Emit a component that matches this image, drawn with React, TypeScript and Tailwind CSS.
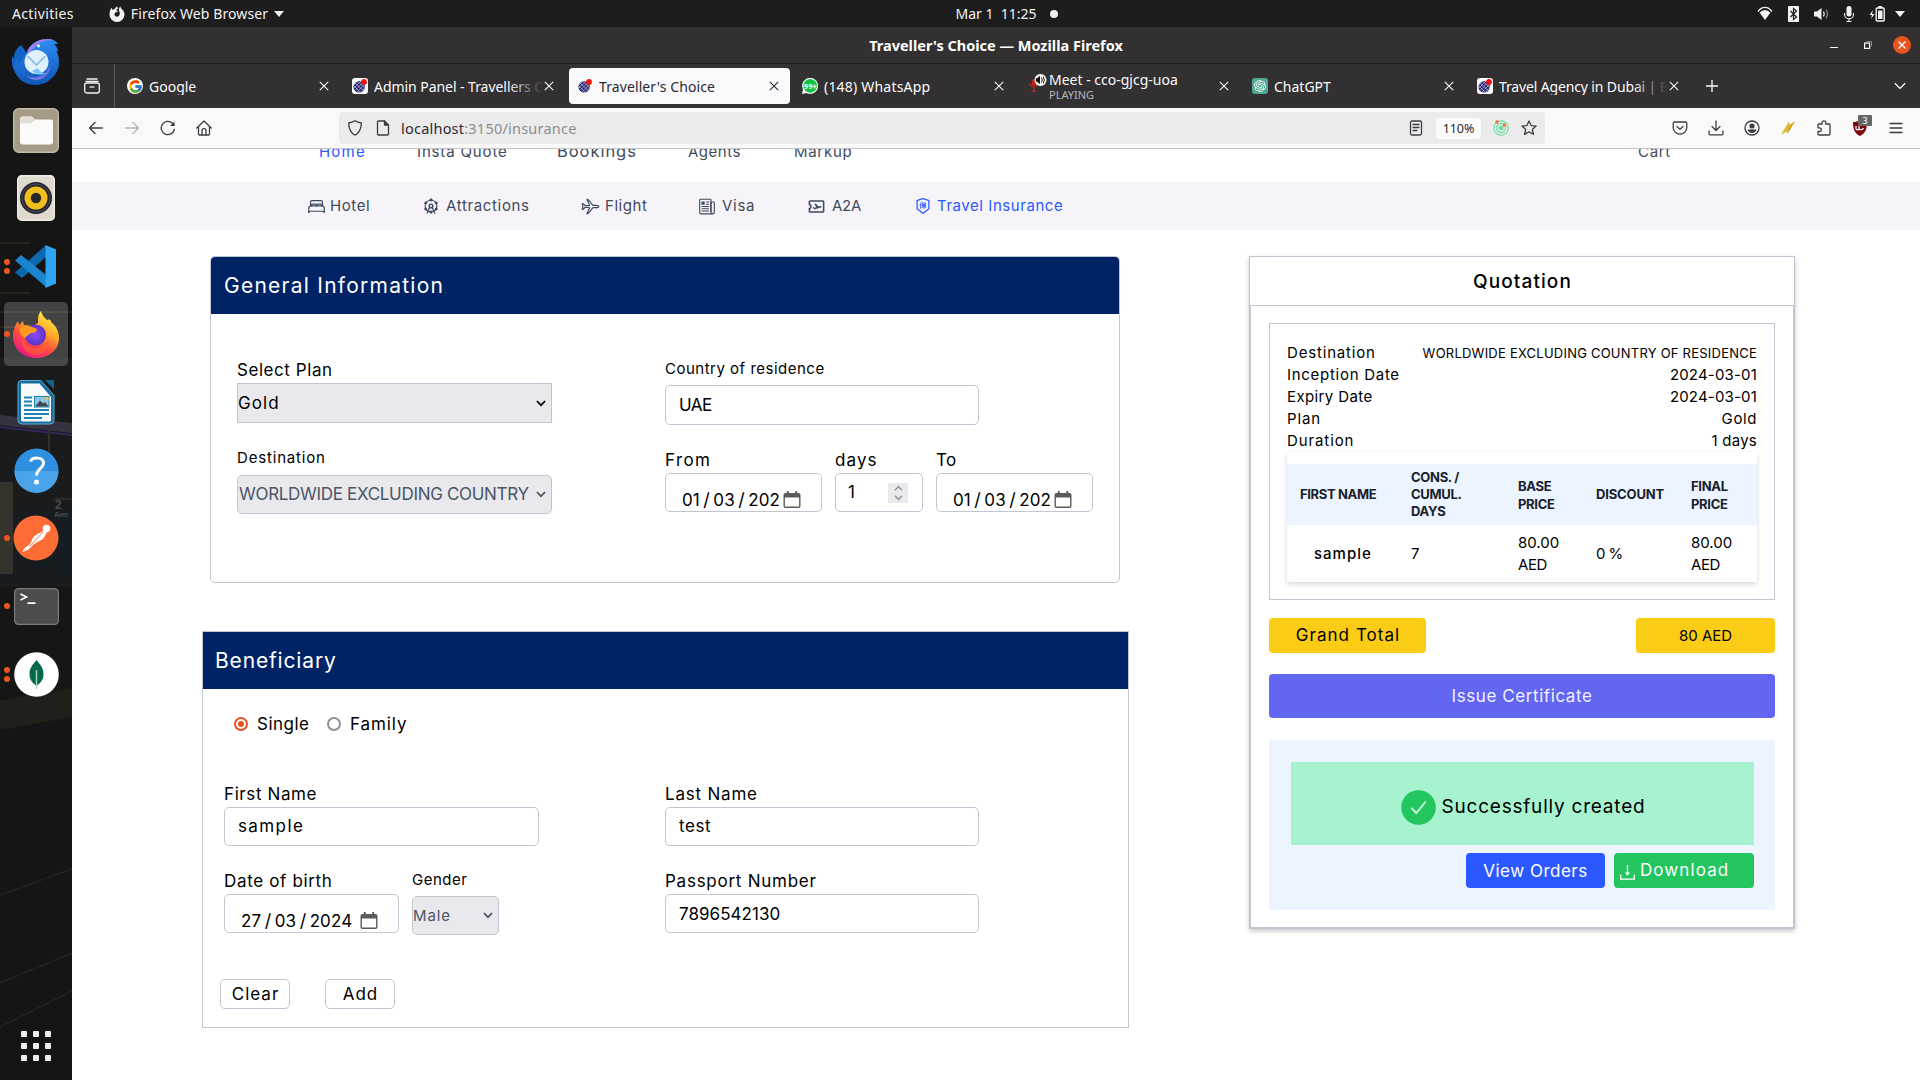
import React from 'react';
import { IoBedOutline, IoAirplaneOutline, IoNewspaperOutline } from 'react-icons/io5';
import { MdOutlineAttractions, MdOutlineAirplaneTicket } from 'react-icons/md';
import { AiOutlineInsurance } from 'react-icons/ai';
import { FcGoogle } from 'react-icons/fc';
import { SiOpenai } from 'react-icons/si';

/* ---------- desktop top bar ---------- */

function TopBar() {
  return (
    <div className="grid h-[27px] shrink-0 grid-cols-[1fr_auto_1fr] items-center bg-[#1d1d1d] text-[14px] leading-[27px] text-[#f2f2f2]">
      <div className="flex items-center pl-[12px]">
        <span className="tracking-[0.35px]">Activities</span>
        <svg className="ml-[35px] h-4 w-4" viewBox="0 0 16 16" fill="#f2f2f2">
          <path d="M8 16a7.5 7.5 0 0 1-7.5-7.6C.5 6 1.200 3.800 2.500 1.700l.9 2L5.600 3C6.200 2 7.300 1 8.300.2 8.200 1.300 8.600 2 9.300 2.600c-1.400.3-1.900 1-2 1.700l1.800.6-1.200 1.200c-1.600.2-2.800 1.500-2.300 3 .5 1.300 2 1.900 3.300 1.400 1.600-.6 2.100-2.200 1.800-3.700-.2-1.200-.9-2.300-.9-3.600C10 2 10.500 1 11.500.4c0 1 .5 1.700 1.300 2.500 1.600 1.500 2.700 3.200 2.700 5.500A7.500 7.500 0 0 1 8 16z" />
        </svg>
        <span className="ml-[6px] tracking-[0.1px]">Firefox Web Browser</span>
        <svg className="ml-[6px] h-[6px] w-[10px]" viewBox="0 0 10 6" fill="#f2f2f2"><path d="M0 0h10L5 6z" /></svg>
      </div>
      <div className="flex items-center pl-[93px]">
        <span className="whitespace-pre">Mar 1  11:25</span>
        <span className="ml-[13px] h-2 w-2 rounded-full bg-[#f2f2f2]" />
      </div>
      <div className="flex items-center justify-end pr-[11px]">
        <TrayCell>
          <svg className="h-4 w-4" viewBox="0 0 16 16"><path d="M1 5.500C5-.1 11-.1 15 5.500" fill="none" stroke="#f2f2f2" strokeWidth="1.300" /><path d="M2.500 6.500Q8 1.500 13.500 6.500L8 14z" fill="#f2f2f2" /></svg>
        </TrayCell>
        <TrayCell>
          <svg className="h-4 w-[11px]" viewBox="0 0 11 16"><rect width="11" height="16" rx="1" fill="#f2f2f2" /><path d="M2.500 5l6 6-3 2.500V2.500l3 2.500-6 6" fill="none" stroke="#1d1d1d" strokeWidth="1.200" /></svg>
        </TrayCell>
        <TrayCell>
          <svg className="h-[14px] w-[15px]" viewBox="0 0 15 14"><path d="M0 4.500h3L7.500 1v12L3 9.500H0z" fill="#f2f2f2" /><path d="M9.500 4.500q1.500 2.500 0 5" fill="none" stroke="#f2f2f2" strokeWidth="1.300" /><path d="M12 2.500q3 4.500 0 9" fill="none" stroke="#8a8a8a" strokeWidth="1.300" /></svg>
        </TrayCell>
        <TrayCell>
          <svg className="h-4 w-[10px]" viewBox="0 0 10 16"><rect x="2.500" width="5" height="10.500" rx="2.500" fill="#f2f2f2" /><path d="M.6 7v1.500a4.400 4.400 0 0 0 8.800 0V7M5 13v2.500M2.500 15.500h5" fill="none" stroke="#f2f2f2" strokeWidth="1.100" /></svg>
        </TrayCell>
        <TrayCell>
          <svg className="h-4 w-[16px]" viewBox="0 0 16 16"><path d="M4 4L.5 9H3l-1 4L5.500 8H3z" fill="#f2f2f2" /><rect x="7.200" y="2" width="8" height="13" rx="1" fill="none" stroke="#f2f2f2" strokeWidth="1.400" /><rect x="9.200" width="4" height="2" fill="#f2f2f2" /><rect x="9" y="4.500" width="4.500" height="8.500" fill="#f2f2f2" /></svg>
        </TrayCell>
        <span className="flex w-[18px] justify-center">
          <svg className="h-[6px] w-[10px]" viewBox="0 0 10 6" fill="#f2f2f2"><path d="M0 0h10L5 6z" /></svg>
        </span>
      </div>
    </div>
  );
}

function TrayCell({ children }: { children: React.ReactNode }) {
  return <span className="flex w-7 justify-center">{children}</span>;
}

/* ---------- dock ---------- */

const ThunderbirdIcon = () => (
  <svg className="h-[48px] w-[50px]" viewBox="0 0 50 48">
    <defs>
      <linearGradient id="tb1" x1="0" y1="0" x2="0" y2="1"><stop offset="0" stopColor="#2f8df0" /><stop offset="1" stopColor="#0f56b8" /></linearGradient>
    </defs>
    <path d="M10 7c4 5 6 8 5 14L7 38C2 33 0 26 1 18c1 2 2 2 2 2 0-6 3-10 7-13z" fill="#1363c8" />
    <path d="M16 13C20 5 28 1 36 1c6 0 9 2 11 5l-4 0c3 3 4 5 4 8l-2-2c4 7 4 17 0 23-4 7-12 12-20 12C14 47 6 41 4 33c-1-5 0-9 3-13l-1 8 6-7c1-3 2-5 4-8z" fill="url(#tb1)" />
    <path d="M17 12C21 4 30 1 36 1c3 0 5 .5 7 1.500C37 1.500 30 3 26 7l-9 9z" fill="#9d7ff0" />
    <path d="M16 38c9 3 20 1 23-11 1 8-6 15-14 15-4 0-7-2-9-4z" fill="#6f74e4" />
    <circle cx="25.500" cy="24" r="12" fill="#dff1fd" />
    <path d="M16.500 18l9 9 9-9" fill="none" stroke="#7fb6ea" strokeWidth="1.500" />
    <path d="M21 33c4 4 9 5 14 2-4 0-7-2-8-5z" fill="#7cc4f8" />
    <circle cx="27.500" cy="8" r="1.400" fill="#fff" />
  </svg>
);
const FilesIcon = () => (
  <svg className="h-[45px] w-[46px]" viewBox="0 0 46 45">
    <rect x=".7" y=".7" width="44.600" height="43.600" rx="5" fill="#a59b87" stroke="#c4bba9" strokeWidth="1.400" />
    <path d="M7 11c0-1.500 1-2.500 2.500-2.500h9l3.500 3h16c1.500 0 2 1 2 2v20.500c0 1.500-1 2.500-2.500 2.500h-28C8 36.500 7 35.500 7 34z" fill="#fbfaf9" />
    <path d="M7 13.500V11c0-1.500 1-2.500 2.500-2.500h9l4 3-5 4H7z" fill="#e4dfd6" />
  </svg>
);
const MusicIcon = () => (
  <svg className="h-[46px] w-[38px]" viewBox="0 0 38 46">
    <rect x=".7" y=".7" width="36.600" height="44.600" rx="4" fill="#dfdacd" stroke="#f1eee6" strokeWidth="1.400" />
    <circle cx="19" cy="23" r="16" fill="#25272e" /><circle cx="19" cy="23" r="14" fill="none" stroke="#4b4a5a" strokeWidth="1" />
    <circle cx="19" cy="23" r="11.500" fill="#f0bf1b" /><circle cx="19" cy="23" r="5.200" fill="#26282b" />
  </svg>
);
const CodeIcon = () => (
  <svg className="h-[43px] w-[44px]" viewBox="0 0 44 43">
    <path d="M1 27.500L32 0v12L8 33z" fill="#0c68ae" />
    <path d="M1 15.500L7 10l25 20v12z" fill="#1b86d0" />
    <path d="M31.500 0L42 4.500v34L31.500 43z" fill="#2ea4f2" />
  </svg>
);
const FirefoxIcon = () => (
  <svg className="h-[47px] w-[46px]" viewBox="0 0 46 47">
    <defs>
      <linearGradient id="ff1" x1=".8" y1="0" x2=".25" y2="1"><stop offset="0" stopColor="#fff14a" /><stop offset=".35" stopColor="#ffb02a" /><stop offset=".65" stopColor="#ff4b3e" /><stop offset="1" stopColor="#e8128c" /></linearGradient>
      <radialGradient id="ff2"><stop offset="0" stopColor="#8a4bff" /><stop offset="1" stopColor="#5a34c2" /></radialGradient>
    </defs>
    <path d="M28 0c1 4 3 6 6 9 3-1 4 0 4 2 5 4 8 9 8 16 0 12-10 20-23 20S0 38 0 25c0-6 2-11 5-15l1 4 4-4 1 4 8 1 6-3c0-5 0-9 3-12z" fill="url(#ff1)" />
    <circle cx="22.500" cy="24" r="10.500" fill="url(#ff2)" />
    <path d="M7 16c4-2 8-2 12 0l5 2c0 3-3 4-6 4-2 2-5 3-6 5-4-2-6-6-5-11z" fill="#ff9a1f" />
    <path d="M9 23c0 9 6 15 14 14 7 0 12-5 12-12 3 11-4 19-13 19S7 35 9 23z" fill="#ff6a2e" opacity=".5" />
  </svg>
);
const WriterIcon = () => (
  <svg className="h-[45px] w-[38px]" viewBox="0 0 38 45">
    <path d="M4 .5h20l13 15V40a4 4 0 0 1-4 4H5a4 4 0 0 1-4-4V4A3.500 3.500 0 0 1 4 .5z" fill="#1b6e9c" stroke="#58a9ce" />
    <path d="M28 0h9v9z" fill="#15628f" />
    <path d="M4 3.500h18.500L34 17v23a1.500 1.500 0 0 1-1.500 1.500h-27A1.500 1.500 0 0 1 4 40z" fill="#f7fbfd" />
    <path d="M7 17.500h8M7 21.500h8M7 25.500h8M7 30h25M7 34h25M7 38h18" stroke="#1f83b5" strokeWidth="1.800" />
    <rect x="17.500" y="16.500" width="14.500" height="10.500" fill="#8fc6e3" stroke="#1f83b5" /><path d="M18 26.500l5-6 3 3 2-1.500 3.500 4.500z" fill="#404a52" /><path d="M27 17h4.500v4z" fill="#f4c430" />
  </svg>
);
const HelpIcon = () => (
  <svg className="h-[45px] w-[45px]" viewBox="0 0 45 45">
    <circle cx="22.500" cy="22.500" r="22" fill="#2f8fe0" /><path d="M.5 23h44a22 22 0 0 1-44 0z" fill="#4ba4ea" />
    <path d="M16.500 13.500c2-5 13-4.500 13 1.500 0 5.500-7 6-7 12.500" fill="none" stroke="#fff" strokeWidth="3" /><circle cx="22.500" cy="34" r="2.500" fill="#fff" />
  </svg>
);
const PostmanIcon = () => (
  <svg className="h-[46px] w-[46px]" viewBox="0 0 46 46">
    <circle cx="23" cy="23" r="22.500" fill="#fd6c35" />
    <circle cx="33.500" cy="13.500" r="3.800" fill="#fff" /><path d="M31 15.500L21 21l-4 8-6 4.500L9.500 37l6-2.500 5.500-5.500 9-5 4-6.500z" fill="#fff" /><path d="M30 17l-14 15" stroke="#fd6c35" strokeWidth=".9" />
  </svg>
);
const TerminalIcon = () => (
  <svg className="h-[37px] w-[45px]" viewBox="0 0 45 37">
    <rect x=".6" y=".6" width="43.800" height="35.800" rx="4" fill="#4c4c4c" stroke="#7a7a7a" strokeWidth="1.200" />
    <path d="M6.500 6l6 3-6 3M13.500 15.200h8" fill="none" stroke="#fff" strokeWidth="1.700" />
  </svg>
);
const MongoIcon = () => (
  <svg className="h-[45px] w-[45px]" viewBox="0 0 45 45">
    <circle cx="22.500" cy="22.500" r="22.300" fill="#fff" /><path d="M22.500 8c4 5 7 8 7 14 0 6-3 9-6.500 11.500V37h-1v-3.500c-3.500-2.500-6.500-5.500-6.500-11.500s3-9 7-14z" fill="#04684a" /><path d="M22.500 18v19" stroke="#a9d3bf" strokeWidth="1.500" />
  </svg>
);

const DOCK = [
  { Icon: ThunderbirdIcon, dots: 0 }, { Icon: FilesIcon, dots: 0 }, { Icon: MusicIcon, dots: 0 }, { Icon: CodeIcon, dots: 2 },
  { Icon: FirefoxIcon, dots: 1, active: true }, { Icon: WriterIcon, dots: 0 }, { Icon: HelpIcon, dots: 0 }, { Icon: PostmanIcon, dots: 1 },
  { Icon: TerminalIcon, dots: 1 }, { Icon: MongoIcon, dots: 2 },
];

function Dock() {
  return (
    <div className="relative flex w-[72px] shrink-0 flex-col justify-between overflow-hidden bg-[#151515]">
      <svg className="absolute inset-0 h-full w-full" viewBox="0 0 72 1053" preserveAspectRatio="none">
        <path d="M0 216h30M0 266h30M0 285h72M0 300h60" stroke="#3a3223" strokeWidth="1" />
        <rect y="330" width="72" height="230" fill="#1a1b1d" />
        <path d="M0 388l72 8v10L0 398z" fill="#37323f" /><path d="M0 400l72 8" stroke="#33285a" strokeWidth="2" />
        <rect y="455" width="13" height="92" fill="#35332b" /><rect x="48" y="400" width="2" height="60" fill="#33302a" />
        <rect x="14" y="480" width="58" height="72" fill="#171c20" />
        <path d="M54 472h18" stroke="#3c3c3c" />
        <path d="M0 574l72-10v98l-72 10z" fill="#161615" /><path d="M0 673l72-12v29L0 703z" fill="#211f1a" />
        <path d="M0 868l72-26M0 956l72-30M0 1000l72-36" stroke="#2a2826" />
      </svg>
      <div className="absolute left-[55px] top-[472px] font-['Liberation_Sans'] text-[12px] font-bold leading-[12px] text-[#4a4a4a]">2<div className="-ml-px text-[7px] leading-[8px] tracking-[-0.3px]">Aver</div></div>
      <div className="relative pt-[1px]">
        {DOCK.map(({ Icon, dots, active }, i) => (
          <div key={i} className="relative flex h-[68px] items-center justify-center">
            {active && <span className="absolute inset-x-1 inset-y-[2px] rounded-[5px] bg-white/20" />}
            {dots > 0 && (
              <span className="absolute left-1 top-0 flex h-full flex-col justify-center gap-[3px]">
                <span className="h-[6px] w-[6px] rounded-full bg-[#e95420]" />
                {dots > 1 && <span className="h-[6px] w-[6px] rounded-full bg-[#e95420]" />}
              </span>
            )}
            <span className="relative"><Icon /></span>
          </div>
        ))}
      </div>
      <div className="relative mb-[19px] ml-[21px] grid grid-cols-[6px_6px_6px] gap-[6px]">
        {Array.from({ length: 9 }, (_, i) => <span key={i} className="h-[6px] w-[6px] rounded-[1px] bg-[#eeeeec]" />)}
      </div>
    </div>
  );
}

/* ---------- browser window ---------- */

function TitleBar() {
  return (
    <div className="grid h-[37px] shrink-0 grid-cols-[1fr_auto_1fr] items-center border-b border-[#1f1d1e] bg-[#333031] text-white">
      <span />
      <span className="pt-[2px] text-[14.5px] font-bold">Traveller's Choice — Mozilla Firefox</span>
      <div className="flex items-center justify-end pr-[9px]">
        <span className="mr-[26px] mt-[5px] h-[1.5px] w-2 bg-white" />
        <svg className="mr-[21px] h-2 w-2" viewBox="0 0 8 8"><rect x=".6" y="2.100" width="5" height="5.300" fill="none" stroke="#fff" strokeWidth="1.200" /><path d="M2.500.5h5v5" fill="none" stroke="#888" strokeWidth="1" /></svg>
        <svg className="h-[18px] w-[18px]" viewBox="0 0 18 18"><circle cx="9" cy="9" r="9" fill="#e95420" /><path d="M5.500 5.500l7 7m0-7l-7 7" stroke="#fff" strokeWidth="1.300" /></svg>
      </div>
    </div>
  );
}

const GlobeFavicon = () => (
  <svg className="h-4 w-4" viewBox="0 0 16 16">
    <rect width="16" height="16" rx="3" fill="#fff" /><circle cx="7.200" cy="8.800" r="5.800" fill="#23236e" />
    <path d="M2 7l4-4M2 10l7-7M3 12.500l9-9M5 14l8-8M8 14.500l5-5M3 5l9 8M2 8l6 6M6 3.500l7 6.500" stroke="#dcdcf0" strokeWidth=".6" />
    <circle cx="12" cy="4" r="2.900" fill="#fb0d0d" />
  </svg>
);
const WhatsAppFavicon = () => (
  <svg className="h-4 w-4" viewBox="0 0 16 16"><path d="M0 16l1-4.500A8 8 0 1 1 4.500 15z" fill="#fff" /><circle cx="8.200" cy="7.800" r="6.900" fill="#12c143" /><text x="8.200" y="10.600" textAnchor="middle" fontFamily="Roboto" fontWeight="700" fontSize="7.500" fill="#fff">99+</text></svg>
);
const MeetFavicon = () => (
  <svg className="h-[18px] w-[18px]" viewBox="0 0 18 18"><rect x="3" y="5" width="3.500" height="7" rx="1.700" fill="#c5221f" /><path d="M.8 9a4 4 0 0 0 8 0M4.800 13v3.500M2.500 17.200h4.600" fill="none" stroke="#c5221f" strokeWidth="1.300" /><circle cx="11.500" cy="6" r="6" fill="#fff" /><path d="M6.800 4.300H8L11 1.800v8.400L8 7.700H6.800z" fill="#151515" /><path d="M12.500 3.500q1.500 2.500 0 5M14.300 2.500q2 3.500 0 7" fill="none" stroke="#151515" strokeWidth="1" /></svg>
);

interface TabInfo { icon: React.ReactNode; title: string; tracking: string; sub?: string; active?: boolean; fade?: boolean }
const TABS: TabInfo[] = [
  { icon: <span className="flex h-4 w-4 items-center justify-center rounded-full bg-white"><FcGoogle className="h-[15px] w-[15px]" /></span>, title: 'Google', tracking: 'tracking-[0px]' },
  { icon: <GlobeFavicon />, title: 'Admin Panel - Travellers C', tracking: 'tracking-[-0.05px]', fade: true },
  { icon: <GlobeFavicon />, title: "Traveller's Choice", tracking: 'tracking-[0.1px]', active: true },
  { icon: <WhatsAppFavicon />, title: '(148) WhatsApp', tracking: 'tracking-[0.2px]' },
  { icon: <MeetFavicon />, title: 'Meet - cco-gjcg-uoa', tracking: 'tracking-[0px]', sub: 'PLAYING' },
  { icon: <span className="flex h-4 w-4 items-center justify-center rounded-[3px] bg-[#4ea894]"><SiOpenai className="h-3 w-3 text-white" /></span>, title: 'ChatGPT', tracking: 'tracking-[0px]' },
  { icon: <GlobeFavicon />, title: 'Travel Agency in Dubai | B', tracking: 'tracking-[-0.14px]', fade: true },
];

function TabStrip() {
  return (
    <div className="flex h-11 shrink-0 items-center bg-[#333031] text-[#fbfbfe]">
      <div className="flex h-full w-[43px] items-center justify-center border-r border-[#5c5a5b] pr-[2px]">
        <svg className="h-4 w-4" viewBox="0 0 16 16" fill="none" stroke="#f2f2f2" strokeWidth="1.300"><path d="M2.500 1h11M1.500 3.500h13" /><rect x=".7" y="5" width="14.600" height="10" rx="2" /><path d="M5.500 9h5" /></svg>
      </div>
      <div className="ml-1 flex h-full">
        {TABS.map((t, i) => (
          <div key={i} className="h-full w-[225px] py-1 pr-1">
            <div className={t.active ? 'flex h-full items-center rounded bg-[#f9f9fb] pl-2 text-[#2b2a33]' : 'flex h-full items-center pl-2'}>
              <span className={t.sub ? '-mt-[6px] mr-[-1px] w-[23px] pl-[2px]' : 'mr-[6px]'}>{t.icon}</span>
              <span className="relative w-[169px] overflow-hidden whitespace-nowrap text-[14px] leading-[17px]">
                <span className={t.tracking}>{t.title}</span>
                {t.sub && <span className="block text-[11px] leading-[14px] text-[#b8b7b9]">{t.sub}</span>}
                {t.fade && <span className="absolute right-0 top-0 h-full w-9 bg-gradient-to-r from-transparent to-[#333031]" />}
              </span>
              <svg className="ml-px h-[10px] w-[10px]" viewBox="0 0 10 10"><path d="M.8.800l8.400 8.400m0-8.400L.8 9.200" stroke="currentColor" strokeWidth="1.100" /></svg>
            </div>
          </div>
        ))}
      </div>
      <svg className="ml-[12px] h-3 w-3" viewBox="0 0 12 12"><path d="M6 0v12M0 6h12" stroke="#fbfbfe" strokeWidth="1.300" /></svg>
      <svg className="ml-auto mr-[14px] h-[8px] w-3" viewBox="0 0 12 8"><path d="M.8 1.200L6 6.400l5.200-5.200" fill="none" stroke="#fbfbfe" strokeWidth="1.300" /></svg>
    </div>
  );
}

const ink = '#3d3c45';
function ToolButton({ children }: { children: React.ReactNode }) {
  return <span className="relative flex h-8 w-9 shrink-0 items-center justify-center">{children}</span>;
}
function Glyph({ children, color = ink }: { children: React.ReactNode; color?: string }) {
  return <svg className="h-4 w-4 shrink-0" viewBox="0 0 16 16" fill="none" stroke={color} strokeWidth="1.300" strokeLinecap="round" strokeLinejoin="round">{children}</svg>;
}

function ToolBar() {
  return (
    <div className="flex h-[41px] shrink-0 items-center border-b border-[#c3c3c3] bg-[#f9f9fa] pl-[6px] pr-[6px]">
      <ToolButton><Glyph><path d="M1.500 8h13M7 2.500L1.500 8 7 13.500" /></Glyph></ToolButton>
      <ToolButton><Glyph color="#b4b4b8"><path d="M1.500 8h13M9 2.500L14.500 8 9 13.500" /></Glyph></ToolButton>
      <ToolButton><Glyph><path d="M14.300 9.500A6.600 6.600 0 1 1 12.500 3.300L14 5" /><path d="M14.500 1.500V6H10z" fill={ink} stroke="none" /></Glyph></ToolButton>
      <ToolButton><Glyph><path d="M.8 8L8 1l7.200 7M2.500 7v7c0 .6.400 1 1 1h9c.6 0 1-.4 1-1V7" /><path d="M6 15v-4.500c0-2.500 4-2.500 4 0V15" /></Glyph></ToolButton>
      <div className="ml-[117px] flex h-8 w-[1206px] items-center rounded bg-[#ebebeb] pl-2 pr-2">
        <Glyph><path d="M8 .8c2.500 1.700 4.500 2 6.300 2.200 0 5.500-1.500 9.500-6.300 12.200C3.200 12.500 1.700 8.500 1.700 3 3.500 2.800 5.500 2.500 8 .8z" /></Glyph>
        <span className="w-3" />
        <Glyph><path d="M3.500 1h6L13.500 5v9c0 .6-.4 1-1 1h-9c-.6 0-1-.4-1-1V2c0-.6.400-1 1-1z" /><path d="M9.500 1v4h4" fill={ink} /></Glyph>
        <span className="ml-[10px] pt-[1px] text-[14.5px] tracking-[0.22px] text-[#8d8c92]"><span className="text-[#2b2a33]">localhost</span>:3150/insurance</span>
        <span className="ml-auto" />
        <Glyph><rect x="2.500" y="1" width="11" height="14" rx="1.500" /><path d="M5 4.500h6M5 7.500h6M5 10.500h4" /></Glyph>
        <span className="ml-3 h-[21px] w-[45px] rounded bg-[#fbfbfb] text-center text-[12.5px] leading-[21px] tracking-[-0.1px] text-[#2b2a33]">110%</span>
        <svg className="ml-3 h-4 w-4" viewBox="0 0 16 16" fill="none" stroke="#6fdfa5" strokeWidth="1.200"><circle cx="8" cy="8" r="7.200" /><circle cx="8" cy="8" r="4.600" /><circle cx="8" cy="8" r="2" fill="#6fdfa5" /><circle cx="4" cy="2" r="1.700" fill="#f46b3a" stroke="none" /><circle cx="11.300" cy="5" r="1.700" fill="#f46b3a" stroke="none" /></svg>
        <span className="w-3" />
        <Glyph><path d="M8 1l2.100 4.600 5 .5-3.800 3.300 1.200 5L8 11.800l-4.500 2.600 1.200-5L.9 6.100l5-.5z" /></Glyph>
      </div>
      <span className="ml-auto" />
      <ToolButton><Glyph><path d="M2.500 2h11c.8 0 1.300.5 1.300 1.300v4a6.800 6.800 0 0 1-13.600 0v-4C1.200 2.500 1.700 2 2.500 2zM5 6.500L8 9.400l3-2.900" /></Glyph></ToolButton>
      <ToolButton><Glyph><path d="M8 .8v9.500M4 6.500l4 4 4-4M1 11v2.500c0 .8.500 1.300 1.300 1.300h11.400c.8 0 1.300-.5 1.300-1.300V11" /></Glyph></ToolButton>
      <ToolButton><Glyph><circle cx="8" cy="8" r="7" /><circle cx="8" cy="6" r="2.600" fill={ink} stroke="none" /><path d="M3.500 9.500h9c-.5 2-2.300 3.500-4.500 3.500S4 11.500 3.500 9.500z" fill={ink} stroke="none" /></Glyph></ToolButton>
      <ToolButton><svg className="h-4 w-4" viewBox="0 0 16 16"><path d="M8.500 2L1 15l5.500-3.500L7.500 13.500 15 1l-5 3.500z" fill="#dcb92a" /><path d="M7.500 13.500L15 1 9.500 8z" fill="#a78a15" /></svg></ToolButton>
      <ToolButton><Glyph><path d="M6 4V2.800a1.900 1.900 0 0 1 3.800 0V4H13c.6 0 1 .4 1 1v9c0 .6-.4 1-1 1H3c-.6 0-1-.4-1-1v-2.500h1.500a1.800 1.800 0 0 0 0-3.700H2V5c0-.6.400-1 1-1z" /></Glyph></ToolButton>
      <ToolButton>
        <svg className="h-4 w-4" viewBox="0 0 16 16"><path d="M8 0c2.500 1.500 4.500 2 7 2 0 6-1 11-7 14C2 13 1 8 1 2c2.500 0 4.500-.5 7-2z" fill="#800610" /><path d="M4 6v2.500c0 1.800 3 1.800 3 0V6m0 2.500c0 1.500 3.500 1.800 4.500-.5" fill="none" stroke="#fff" strokeWidth="1.200" /></svg>
        <span className="absolute left-4 top-[3px] h-[11px] w-[14px] rounded-[1px] bg-[#666] text-center text-[9.5px] leading-[11px] text-white">3</span>
      </ToolButton>
      <ToolButton><Glyph><path d="M2 3.500h12M2 8h12M2 12.500h12" /></Glyph></ToolButton>
    </div>
  );
}

/* ---------- web page ---------- */

function SiteNav() {
  return (
    <>
      <div className="h-[33px] shrink-0 overflow-hidden pl-[247px] text-[#3f4a5e]">
        <div className="-mt-[8px] flex text-[15px] leading-[22px]">
          <span className="w-[98px] tracking-[1.2px] text-[#2b59ff]">Home</span>
          <span className="w-[140px] tracking-[0.85px]">Insta Quote</span>
          <span className="-mt-px w-[131px] text-[16.5px] tracking-[0.95px]">Bookings</span>
          <span className="w-[106px] tracking-[0.52px]">Agents</span>
          <span className="w-[844px] tracking-[0.7px]">Markup</span>
          <span className="tracking-[0.7px]">Cart</span>
        </div>
      </div>
      <div className="flex h-12 shrink-0 items-center rounded-t bg-[#f6f4f8] pl-[235px] text-[15px] text-[#3f4a5e]">
        <span className="flex w-[115px] items-center gap-[4px]"><IoBedOutline className="h-[19px] w-[19px]" /><span className="tracking-[0.6px]">Hotel</span></span>
        <span className="flex w-[159px] items-center gap-[6px]"><MdOutlineAttractions className="h-[18px] w-[18px]" /><span className="tracking-[0.65px]">Attractions</span></span>
        <span className="flex w-[117px] items-center gap-[5px]"><IoAirplaneOutline className="h-[19px] w-[19px]" /><span className="tracking-[0.56px]">Flight</span></span>
        <span className="flex w-[109px] items-center gap-[6px]"><IoNewspaperOutline className="h-[19px] w-[18px]" /><span className="tracking-[0.7px]">Visa</span></span>
        <span className="flex w-[107px] items-center gap-[6px]"><MdOutlineAirplaneTicket className="h-[19px] w-[19px]" /><span className="tracking-[-0.25px]">A2A</span></span>
        <span className="flex items-center gap-[5px] text-[#2b59ff]"><AiOutlineInsurance className="h-[18px] w-[18px]" /><span className="tracking-[0.56px]">Travel Insurance</span></span>
      </div>
    </>
  );
}

const Chevron = ({ className }: { className: string }) => (
  <svg className={className} viewBox="0 0 10 7"><path d="M.9 1l4.100 4.200L9.100 1" fill="none" stroke="currentColor" strokeWidth="1.700" /></svg>
);
const Calendar = ({ className }: { className: string }) => (
  <svg className={className} viewBox="0 0 18 18"><path d="M3.500 0h2v2h7V0h2v2H16a2 2 0 0 1 2 2v12a2 2 0 0 1-2 2H2a2 2 0 0 1-2-2V4a2 2 0 0 1 2-2h1.500zM1.500 7v8.500c0 .6.400 1 1 1h13c.6 0 1-.4 1-1V7z" fill="#5b5b5b" fillRule="evenodd" /></svg>
);

function TextField({ value, size, text = '' }: { value: string; size: string; text?: string }) {
  return <div className={`flex items-center rounded-[5px] border border-[#c0c6d1] bg-white pl-[13px] ${size} ${text}`}>{value}</div>;
}

function DateField({ day, month, year, width, gap }: { day: string; month: string; year: string; width: string; gap: string }) {
  return (
    <div className={`flex h-[39px] items-center rounded-[5px] border border-[#c0c6d1] bg-white pl-[16px] pt-[14px] ${width}`}>
      <span className="tracking-[0.1px]">{day}</span><span className="mx-[3.5px] text-[18px]">/</span>
      <span className="tracking-[0.1px]">{month}</span><span className="mx-[3.5px] text-[18px]">/</span>
      <span className="tracking-[0.1px]">{year}</span>
      <Calendar className={`mt-[-1px] h-[17px] w-[18px] ${gap}`} />
    </div>
  );
}

function GeneralInformation() {
  return (
    <section className="h-[327px] w-[910px] overflow-hidden rounded-[5px] border border-[#c0c6d1] bg-white">
      <h2 className="h-[57px] bg-[#002366] pl-[13px] text-[21px] leading-[57px] tracking-[1.25px] text-white">General Information</h2>
      <div className="flex pl-[26px] pt-[43px] text-[17px] leading-[26px]">
        <div className="w-[428px]">
          <div className="h-[26px] tracking-[0.56px]">Select Plan</div>
          <div className="flex h-10 w-[315px] items-center border border-[#c0c6d1] bg-[#e9e9ed] tracking-[1.1px]">
            Gold<Chevron className="ml-auto mr-[5px] h-[7px] w-[10px]" />
          </div>
          <div className="mb-1 mt-[22px] h-[26px] text-[15px] tracking-[0.82px]">Destination</div>
          <div className="flex h-[39px] w-[315px] items-center rounded-[5px] border border-[#c0c6d1] bg-[#e9e9ed] text-[#4b5568]">
            <span className="-mt-px pl-px tracking-[-0.31px]">WORLDWIDE EXCLUDING COUNTRY</span><Chevron className="ml-auto mr-[5px] h-[7px] w-[10px]" />
          </div>
        </div>
        <div>
          <div className="mb-1 h-6 text-[15px] leading-6 tracking-[0.5px]">Country of residence</div>
          <TextField value="UAE" size="h-10 w-[314px]" text="tracking-[-0.5px]" />
          <div className="mt-[22px] flex gap-[13px]">
            <div>
              <div className="tracking-[1.4px]">From</div>
              <DateField day="01" month="03" year="202" width="w-[157px]" gap="ml-[3px]" />
            </div>
            <div>
              <div className="tracking-[1.1px]">days</div>
              <div className="flex h-[39px] w-[88px] items-center rounded-[5px] border border-[#c0c6d1] bg-white pl-[12px]">
                <span className="-mt-px">1</span>
                <span className="ml-auto mr-[14px] flex h-5 w-5 flex-col items-center justify-center gap-[4px] bg-[#e9e9ed] text-[#8f8f9d]">
                  <Chevron className="h-[6px] w-[9px] rotate-180" /><Chevron className="h-[6px] w-[9px]" />
                </span>
              </div>
            </div>
            <div>
              <div className="tracking-[0.35px]">To</div>
              <DateField day="01" month="03" year="202" width="w-[157px]" gap="ml-[3px]" />
            </div>
          </div>
        </div>
      </div>
    </section>
  );
}

function Beneficiary() {
  return (
    <section className="-ml-2 mt-12 h-[397px] w-[927px] border border-[#c0c6d1] bg-white">
      <h2 className="h-[57px] bg-[#002366] pl-[12px] text-[21px] leading-[57px] tracking-[0.84px] text-white">Beneficiary</h2>
      <div className="pl-[21px] pt-[22px] text-[17px] leading-[26px]">
        <div className="flex h-[26px] items-center pl-[10px]">
          <span className="flex h-[14px] w-[14px] items-center justify-center rounded-full border-2 border-[#e95420]"><span className="h-[6px] w-[6px] rounded-full bg-[#e95420]" /></span>
          <span className="ml-[9px] w-[70px] tracking-[0.48px]">Single</span>
          <span className="h-[14px] w-[14px] rounded-full border-2 border-[#8f8f9d]" />
          <span className="ml-[9px] tracking-[0.92px]">Family</span>
        </div>
        <div className="mt-11 flex">
          <div className="w-[441px]">
            <div className="tracking-[0.6px]">First Name</div>
            <TextField value="sample" size="h-[39px] w-[315px] pb-px" text="tracking-[1.4px]" />
          </div>
          <div>
            <div className="tracking-[0.8px]">Last Name</div>
            <TextField value="test" size="h-[39px] w-[314px] pb-px" text="tracking-[0.57px]" />
          </div>
        </div>
        <div className="mt-[22px] flex">
          <div className="w-[188px]">
            <div className="tracking-[0.66px]">Date of birth</div>
            <DateField day="27" month="03" year="2024" width="w-[175px]" gap="ml-[8px]" />
          </div>
          <div className="w-[253px]">
            <div className="mb-1 h-6 text-[15px] leading-6 tracking-[0.5px]">Gender</div>
            <div className="flex h-[39px] w-[87px] items-center rounded-[5px] border border-[#c0c6d1] bg-[#e9e9ed] text-[15px] tracking-[0.9px] text-[#4b5568]">
              Male<Chevron className="ml-auto mr-[5px] h-[7px] w-[10px]" />
            </div>
          </div>
          <div>
            <div className="tracking-[0.75px]">Passport Number</div>
            <TextField value="7896542130" size="h-[39px] w-[314px]" text="tracking-[0.05px]" />
          </div>
        </div>
        <div className="-ml-1 mt-11 flex gap-[35px]">
          <button className="h-[30px] w-[70px] rounded-[5px] border border-[#c0c6d1] pl-px text-[17px] leading-[27px] tracking-[1px]">Clear</button>
          <button className="h-[30px] w-[70px] rounded-[5px] border border-[#c0c6d1] pl-px text-[17px] leading-[27px] tracking-[1px]">Add</button>
        </div>
      </div>
    </section>
  );
}

const SUMMARY = [
  { label: 'Destination', lt: 'tracking-[0.82px]', value: 'WORLDWIDE EXCLUDING COUNTRY OF RESIDENCE', vt: 'text-[13px] tracking-[0.23px]' },
  { label: 'Inception Date', lt: 'tracking-[0.72px]', value: '2024-03-01', vt: 'tracking-[0.18px]' },
  { label: 'Expiry Date', lt: 'tracking-[0.39px]', value: '2024-03-01', vt: 'tracking-[0.18px]' },
  { label: 'Plan', lt: 'tracking-[0.9px]', value: 'Gold', vt: 'tracking-[0.6px]' },
  { label: 'Duration', lt: 'tracking-[0.9px]', value: '1 days', vt: 'tracking-[0.25px]' },
];

function Quotation() {
  return (
    <aside className="h-[673px] w-[546px] bg-white shadow-[0_2px_5px_rgba(0,0,0,0.22)]">
      <h3 className="h-[50px] border border-[#c0c6d1] pl-px text-center text-[19px] font-medium leading-[49px] tracking-[1.1px]">Quotation</h3>
      <div className="h-[623px] border-2 border-t-0 border-[#c0c6d1] px-[18px] pt-[17px]">
        <div className="h-[277px] border border-[#c0c6d1] px-[17px] pt-[18px]">
          {SUMMARY.map((r) => (
            <div key={r.label} className="flex h-[22px] items-center justify-between text-[15px] leading-[22px]">
              <span className={r.lt}>{r.label}</span><span className={r.vt}>{r.value}</span>
            </div>
          ))}
          <div className="pt-[12px] shadow-[0_2px_5px_rgba(0,0,0,0.16)]">
            <div className="grid h-[61px] grid-cols-[124px_107px_78px_95px_66px] items-center bg-[#ebf4ff] text-[13px] font-bold leading-[17px] text-[#1a202c]">
              <span className="pl-[13px] tracking-[-0.35px]">FIRST NAME</span>
              <span className="tracking-[-0.3px]">CONS. /<br />CUMUL.<br />DAYS</span>
              <span className="leading-[18px] tracking-[-0.3px]">BASE<br />PRICE</span>
              <span className="tracking-[-0.15px]">DISCOUNT</span>
              <span className="leading-[18px] tracking-[-0.3px]">FINAL<br />PRICE</span>
            </div>
            <div className="grid h-[57px] grid-cols-[124px_107px_78px_95px_66px] items-center text-[15px] leading-[22px]">
              <span className="pl-[27px] font-medium tracking-[1px]">sample</span>
              <span>7</span>
              <span>80.00<br /><span className="tracking-[-0.4px]">AED</span></span>
              <span className="tracking-[-0.6px]">0 %</span>
              <span>80.00<br /><span className="tracking-[-0.4px]">AED</span></span>
            </div>
          </div>
        </div>
        <div className="mt-[18px] flex h-[35px] justify-between text-center">
          <div className="w-[157px] rounded bg-[#facc15] pl-px text-[17px] leading-[34px] tracking-[1.05px]">Grand Total</div>
          <div className="w-[139px] rounded bg-[#facc15] text-[15px] leading-[36px]">80 AED</div>
        </div>
        <button className="mt-[21px] block h-11 w-full rounded bg-[#6366f1] text-[17px] leading-[44px] tracking-[0.58px] text-[#f1f1ff]">Issue Certificate</button>
        <div className="mt-[22px] h-[170px] bg-[#ebf4ff] pl-[22px] pr-[21px] pt-[22px]">
          <div className="flex h-[83px] items-center justify-center bg-[#a7f3d0] pl-[1px] pt-[8px]">
            <svg className="h-[35px] w-[35px]" viewBox="0 0 35 35"><circle cx="17.500" cy="17.500" r="17.300" fill="#22c55e" /><path d="M10.500 18l4.800 5L24.800 11.500" fill="none" stroke="#c9f7dc" strokeWidth="1.900" /></svg>
            <span className="ml-[6px] text-[19px] tracking-[0.78px]">Successfully created</span>
          </div>
          <div className="mt-2 flex justify-end gap-[9px] text-[17px] text-white">
            <button className="h-[35px] w-[139px] rounded bg-[#2b59ff] leading-[36px] tracking-[0.5px]">View Orders</button>
            <button className="flex h-[35px] w-[140px] items-center rounded bg-[#22c55e] pl-[6px] pt-px tracking-[1.1px]">
              <svg className="mr-[5px] mt-[3px] h-[15px] w-[15px]" viewBox="0 0 15 15"><path d="M.7 9.500v4.700h13.600V9.500M7.500 0v8.500" fill="none" stroke="#fff" strokeWidth="1.300" /><path d="M5 7.500h5l-2.500 3.300z" fill="#fff" /></svg>
              Download
            </button>
          </div>
        </div>
      </div>
    </aside>
  );
}

export default function App() {
  return (
    <div className="flex h-[1080px] w-[1920px] flex-col overflow-hidden bg-white font-['Noto_Sans',sans-serif]">
      <TopBar />
      <div className="flex min-h-0 flex-1">
        <Dock />
        <div className="flex min-w-0 flex-1 flex-col">
          <TitleBar />
          <TabStrip />
          <ToolBar />
          <main className="min-h-0 flex-1 overflow-hidden bg-white font-['Inter',sans-serif] text-black">
            <SiteNav />
            <div className="flex justify-between pl-[138px] pr-[125px] pt-[26px]">
              <div>
                <GeneralInformation />
                <Beneficiary />
              </div>
              <Quotation />
            </div>
          </main>
        </div>
      </div>
    </div>
  );
}
